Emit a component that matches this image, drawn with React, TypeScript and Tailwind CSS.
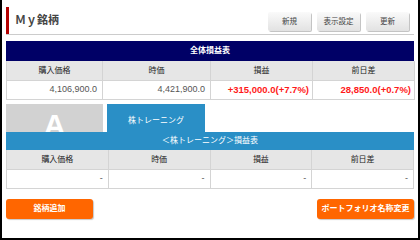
const font = {
  fontFamily: '"Liberation Sans", "Noto Sans CJK JP", sans-serif',
};

const summaryCols = ['購入価格', '時価', '損益', '前日差'];

function HeadCell({ label }: { label: string }) {
  return (
    <div className="flex h-[20px] items-center justify-center border-r border-b border-[#d4d4d4] bg-[#e6e6e6] text-[8px] text-[#222]">
      {label}
    </div>
  );
}

function ValueCell({ value, red }: { value: string; red?: boolean }) {
  return (
    <div
      className={
        red
          ? 'flex h-[19px] items-center justify-end border-r border-b border-[#d4d4d4] bg-white pr-[3px] text-[9.5px] font-bold text-[#ff1a1a]'
          : 'flex h-[19px] items-center justify-end border-r border-b border-[#d4d4d4] bg-white pr-[5px] text-[9px] text-[#555]'
      }
    >
      {value}
    </div>
  );
}

function GrayButton({ label }: { label: string }) {
  return (
    <button className="h-[19px] w-[43px] rounded-[2px] bg-gradient-to-b from-[#fafafa] to-[#e2e2e2] text-[7.5px] text-[#444] shadow-[1px_1px_0_#c4c4c4]">
      {label}
    </button>
  );
}

function OrangeButton({ label, width }: { label: string; width: string }) {
  return (
    <button
      className={`${width} h-[20px] rounded-[3px] bg-[#ff6600] text-[8px] font-bold text-white shadow-[1px_1px_1px_#c8c8c8]`}
    >
      {label}
    </button>
  );
}

export default function App() {
  return (
    <div
      className="h-[240px] w-[420px] overflow-hidden border-r-2 border-b-2 border-l-2 border-black bg-white px-1 pt-[7px]"
      style={font}
    >
      {/* title */}
      <div className="flex h-[28px] items-stretch border-b border-[#cccccc]">
        <div className="w-[3px] bg-[#b30000]" />
        <div className="flex flex-1 items-center pl-[6px] text-[11px] font-bold text-[#444]">
          Ｍｙ銘柄
        </div>
        <div className="mr-[5px] mt-[5px] flex gap-[6px]">
          <GrayButton label="新規" />
          <GrayButton label="表示設定" />
          <GrayButton label="更新" />
        </div>
      </div>

      {/* overall summary */}
      <div className="mt-[6px] flex h-[20px] items-center justify-center bg-[#000066] text-[8px] font-bold text-white">
        全体損益表
      </div>
      <div className="grid grid-cols-[96px_108px_102px_102px] border-l border-[#d4d4d4]">
        {summaryCols.map((c) => (
          <HeadCell key={c} label={c} />
        ))}
        <ValueCell value="4,106,900.0" />
        <ValueCell value="4,421,900.0" />
        <ValueCell value="+315,000.0(+7.7%)" red />
        <ValueCell value="28,850.0(+0.7%)" red />
      </div>

      {/* tabs */}
      <div className="mt-[4px] flex h-[28px] gap-[4px]">
        <div className="flex w-[97px] justify-center overflow-hidden bg-[#d2d2d2]">
          <span className="mt-[6px] text-[30px] leading-none font-bold text-white">A</span>
        </div>
        <div className="flex w-[98px] items-end justify-center bg-[#2a8fc6] pb-[5px] text-[8px] text-white">
          株トレーニング
        </div>
      </div>
      <div className="flex h-[18px] items-center justify-center bg-[#2a8fc6] text-[8px] text-white">
        ＜株トレーニング＞損益表
      </div>
      <div className="grid grid-cols-4 border-l border-[#d4d4d4]">
        {summaryCols.map((c) => (
          <HeadCell key={c} label={c} />
        ))}
        <ValueCell value="-" />
        <ValueCell value="-" />
        <ValueCell value="-" />
        <ValueCell value="-" />
      </div>

      {/* actions */}
      <div className="mt-[10px] flex justify-between">
        <OrangeButton label="銘柄追加" width="w-[87px]" />
        <OrangeButton label="ポートフォリオ名称変更" width="w-[97px]" />
      </div>
    </div>
  );
}
